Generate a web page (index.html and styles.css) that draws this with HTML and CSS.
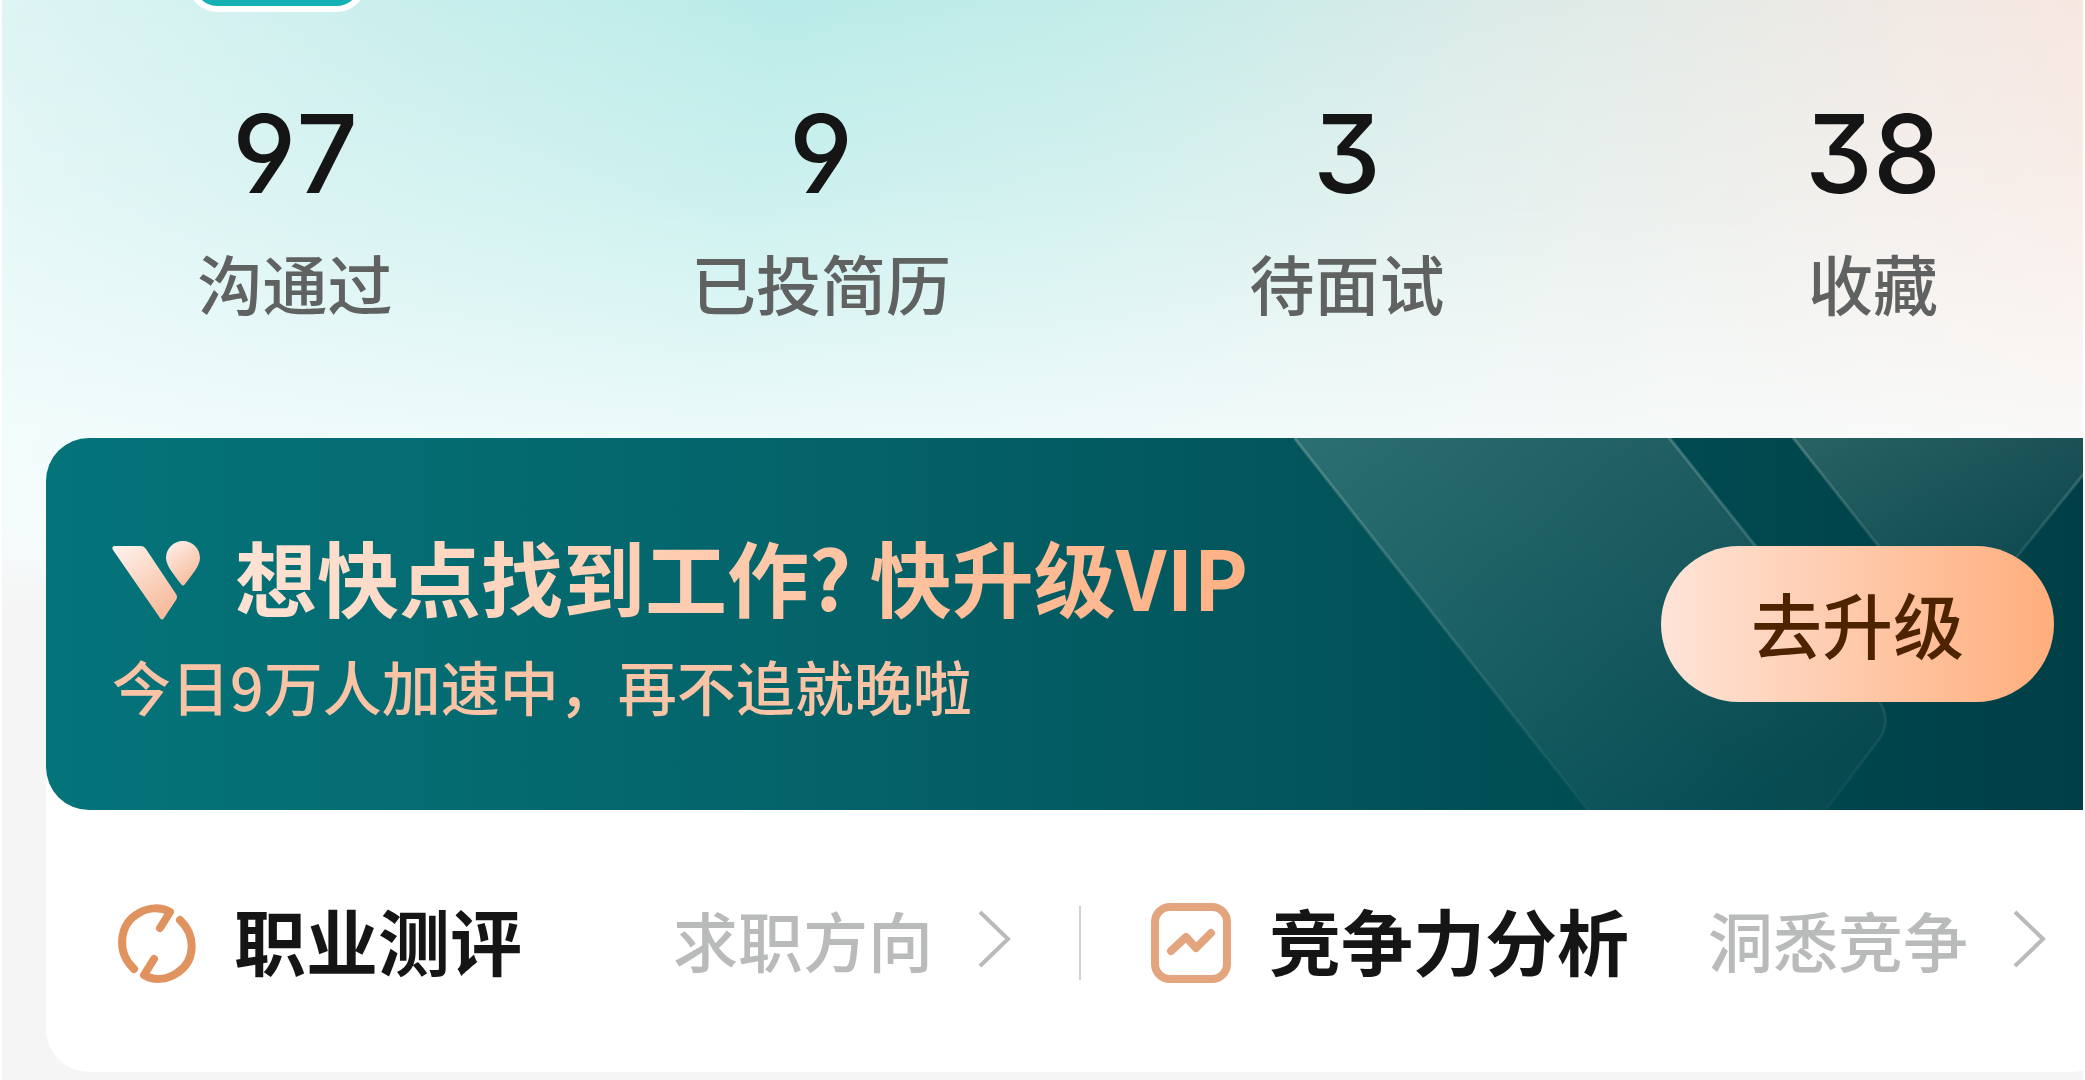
FILE: index.html
```html
<!DOCTYPE html>
<html lang="zh-CN">
<head>
    <meta charset="UTF-8">
    <meta name="viewport" content="width=device-width, initial-scale=1.0">
    <title>我的</title>
    <link rel="stylesheet" href="styles.css">
</head>
<body>
    <div class="page">
        <div class="avatar"><div class="tag"></div></div>

        <ul class="stats">
            <li><a href="#"><strong>97</strong><span>沟通过</span></a></li>
            <li><a href="#"><strong>9</strong><span>已投简历</span></a></li>
            <li><a href="#"><strong>3</strong><span>待面试</span></a></li>
            <li><a href="#"><strong>38</strong><span>收藏</span></a></li>
        </ul>

        <div class="card">
            <div class="vip">
                <svg class="vip-bg" width="820" height="372" viewBox="0 0 820 372" aria-hidden="true">
                    <defs>
                        <linearGradient id="face" x1="0" y1="0" x2="0.7" y2="1">
                            <stop offset="0" stop-color="#fff0dc" stop-opacity=".17"/>
                            <stop offset="1" stop-color="#fff0dc" stop-opacity=".03"/>
                        </linearGradient>
                        <linearGradient id="edge" x1="0" y1="0" x2="0" y2="1">
                            <stop offset="0" stop-color="#cfe0d6" stop-opacity=".26"/>
                            <stop offset="1" stop-color="#cfe0d6" stop-opacity=".03"/>
                        </linearGradient>
                    </defs>
                    <path d="M-6 -8 L300 380 H526 L586 300 Q597 283 586 264 L369 -8 Z" fill="url(#face)" stroke="url(#edge)" stroke-width="3"/>
                    <path d="M493 -8 L630 166 Q654 198 680 172 L830 -14 Z" fill="url(#face)" stroke="url(#edge)" stroke-width="3"/>
                </svg>
                <div class="vip-text">
                    <h2>
                        <svg class="logo" width="90" height="82" viewBox="0 0 90 82" aria-hidden="true">
                            <defs>
                                <linearGradient id="gold" x1="0" y1="0" x2="0.6" y2="1">
                                    <stop offset="0" stop-color="#fff3ef"/>
                                    <stop offset="1" stop-color="#f7bd9e"/>
                                </linearGradient>
                            </defs>
                            <path d="M3 6 H29 Q32 6 34 9 L64 54 Q66 57 64 60 L52 78 Q50 81 48 78 L1 10 Q-1 6 3 6 Z" fill="url(#gold)"/>
                            <path d="M71 1 C81 1 88 9 88 18 C88 26 79 36 73 44 Q71 47 69 44 C63 36 54 26 54 18 C54 9 61 1 71 1 Z" fill="url(#gold)"/>
                        </svg>
                        <span>想快点找到工作? 快升级VIP</span>
                    </h2>
                    <p>今日9万人加速中，再不追就晚啦</p>
                </div>
                <button type="button" class="upgrade">去升级</button>
            </div>

            <div class="links">
                <a href="#">
                    <svg width="80" height="82" viewBox="0 0 80 82" aria-hidden="true">
                        <g fill="none" stroke="#e0935f" stroke-width="8" stroke-linecap="round" stroke-linejoin="round">
                            <path d="M18 67 C0 50 3 22 23 11 C33 5 45 5 54 10 L44 26"/>
                            <path d="M64 18 C80 33 80 59 61 71 C51 78 38 79 28 73 L38 57"/>
                        </g>
                    </svg>
                    <b>职业测评</b>
                    <span>求职方向</span>
                    <svg class="arrow" width="34" height="60" viewBox="0 0 34 60" aria-hidden="true"><path d="M3 3 L31 30 L3 57" fill="none" stroke="#b9bbbb" stroke-width="4"/></svg>
                </a>
                <a href="#">
                    <svg width="80" height="82" viewBox="0 0 80 82" aria-hidden="true">
                        <g fill="none" stroke="#e3a57d" stroke-width="8" stroke-linecap="round" stroke-linejoin="round">
                            <rect x="4" y="5" width="72" height="72" rx="15"/>
                            <path d="M20 49 L35 35 L45 46 L60 31"/>
                        </g>
                    </svg>
                    <b>竞争力分析</b>
                    <span>洞悉竞争</span>
                    <svg class="arrow" width="34" height="60" viewBox="0 0 34 60" aria-hidden="true"><path d="M3 3 L31 30 L3 57" fill="none" stroke="#b9bbbb" stroke-width="4"/></svg>
                </a>
            </div>
        </div>
    </div>
</body>
</html>
```
FILE: styles.css
```css
*{margin:0;padding:0;box-sizing:border-box;}
body{background:#f5f5f5;font-family:"Noto Sans CJK SC",sans-serif;color:#151515;}
li{list-style:none;}
a{color:inherit;text-decoration:none;}

.page{
    overflow:hidden;
    min-height:100vh;
    border:solid #fff;
    border-width:0 2px;
    background:
        linear-gradient(180deg,rgba(250,255,255,0) 0,rgba(250,255,255,.3) 200px,rgba(250,255,255,.76) 430px,rgba(247,252,252,.95) 540px,#f5f5f5 610px),
        linear-gradient(102deg,#def5f4 0,#cbefed 16%,#b9ebe8 34%,#c3ece9 48%,#dcebe8 65%,#f2e9e4 84%,#ffe4dd 100%);
}

.avatar{display:flex;align-items:flex-end;height:12px;padding-left:185px;overflow:hidden;}
.avatar .tag{flex:none;width:180px;height:62px;border:6px solid #fff;border-radius:31px;background:#14b0b6;}

.stats{display:flex;margin-right:-53px;padding:88px 0 124px 30px;}
.stats li{flex:1;text-align:center;}
.stats a{display:flex;flex-direction:column;gap:42px;}
.stats strong{font:500 108px/108px Inter,sans-serif;font-feature-settings:"cv04","cv09";font-kerning:none;}
.stats span{font-size:65px;line-height:64px;font-weight:500;color:#606262;}

.card{margin:0 -31px 0 44px;background:#fff;border-radius:43px;}

.vip{
    position:relative;
    display:flex;
    align-items:center;
    justify-content:space-between;
    height:372px;
    padding:0 60px 0 66px;
    border-radius:43px 0 0 43px;
    overflow:hidden;
    background:linear-gradient(90deg,#04747a 0,#04646a 36%,#02545b 62%,#00464d 85%,#003e46 100%);
}
.vip-bg{position:absolute;right:0;top:0;}
.vip-text{position:relative;padding-top:4px;}
.vip h2{display:flex;align-items:center;gap:33px;font-size:82px;line-height:100px;font-weight:700;}
.vip h2 .logo{margin-top:10px;}
.vip h2 span{color:transparent;background:linear-gradient(90deg,#fde2d3,#ffb184);background-clip:text;-webkit-background-clip:text;}
.vip p{font-size:59px;line-height:80px;margin-top:20px;font-weight:500;color:#f9c3a6;}
.upgrade{
    position:relative;
    width:393px;
    height:156px;
    padding-bottom:4px;
    border:none;
    border-radius:78px;
    background:linear-gradient(90deg,#fee4d8,#ffae7c);
    font:500 71px/80px "Noto Sans CJK SC",sans-serif;
    color:#4d2300;
    cursor:pointer;
}

.links{display:flex;padding:96px 0 92px;}
.links a{flex:1;display:flex;align-items:center;height:74px;padding:0 68px 0 70px;}
.links a + a{border-left:2px solid #d0d2d2;}
.links b{margin-left:38px;padding-bottom:8px;font-size:72px;line-height:78px;font-weight:700;}
.links span{margin-left:auto;padding-bottom:8px;font-size:65px;line-height:78px;font-weight:500;color:#b9bbbb;}
.links .arrow{margin:0 0 8px 44px;}
.links svg{flex:none;}
```
